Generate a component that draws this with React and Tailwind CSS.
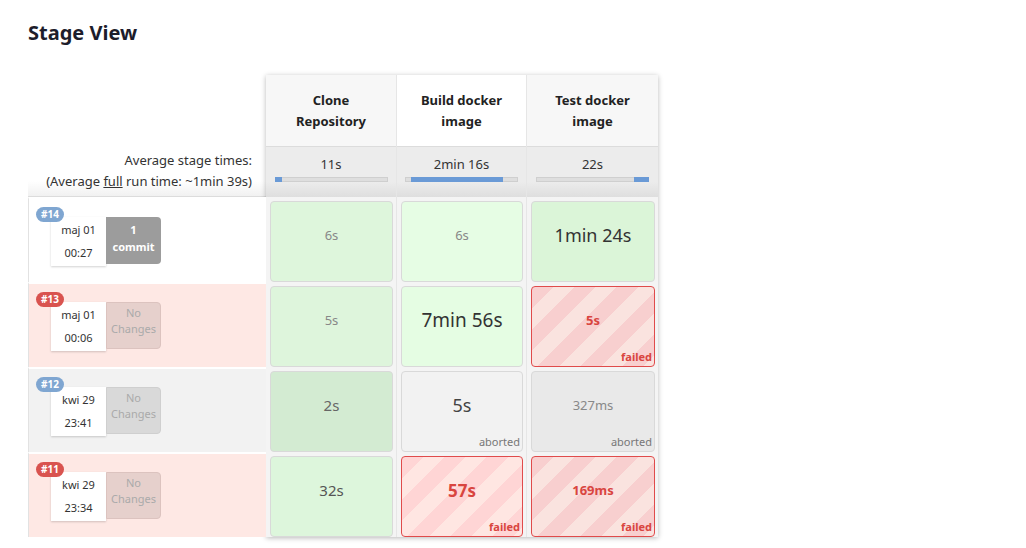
import React from "react";

const stages = [
    { name: ["Clone", "Repository"], avg: "11s", bar: { left: 0, width: 7 }, head: "bg-[#f7f7f7]" },
    { name: ["Build docker", "image"], avg: "2min 16s", bar: { left: 6, width: 92 }, head: "bg-white" },
    { name: ["Test docker", "image"], avg: "22s", bar: { left: 98, width: 15 }, head: "bg-[#f7f7f7]" },
];

const runs = [
    {
        id: "#14", status: "ok", date: "maj 01", time: "00:27", commit: true,
        cells: [
            { text: "6s", tone: "bg-[#def6dc]", size: "text-[13px] text-[#888]" },
            { text: "6s", tone: "bg-[#e6fde4]", size: "text-[13px] text-[#888]" },
            { text: "1min 24s", tone: "bg-[#dbf5d8]", size: "text-[18px] text-[#333]" },
        ],
    },
    {
        id: "#13", status: "failed", date: "maj 01", time: "00:06",
        cells: [
            { text: "5s", tone: "bg-[#def5dc]", size: "text-[13px] text-[#888]" },
            { text: "7min 56s", tone: "bg-[#e5fde3]", size: "text-[19px] text-[#333]" },
            { text: "5s", failed: true, stripes: "bg-[repeating-linear-gradient(135deg,#f8cfcf_0px,#f8cfcf_15px,#fae3df_15px,#fae3df_30px)]", size: "text-[13px]" },
        ],
    },
    {
        id: "#12", status: "aborted", date: "kwi 29", time: "23:41",
        cells: [
            { text: "2s", tone: "bg-[#d3ebd2]", size: "text-[15px] text-[#666]" },
            { text: "5s", tone: "bg-[#f2f2f2]", size: "text-[18px] text-[#444]", note: "aborted" },
            { text: "327ms", tone: "bg-[#e9e9e9]", size: "text-[13px] text-[#888]", note: "aborted" },
        ],
    },
    {
        id: "#11", status: "failed", date: "kwi 29", time: "23:34",
        cells: [
            { text: "32s", tone: "bg-[#ddf6dc]", size: "text-[15px] text-[#555]" },
            { text: "57s", failed: true, stripes: "bg-[repeating-linear-gradient(135deg,#ffd5d5_0px,#ffd5d5_15px,#ffe6e2_15px,#ffe6e2_30px)]", size: "text-[17px]" },
            { text: "169ms", failed: true, stripes: "bg-[repeating-linear-gradient(135deg,#f8cfcf_0px,#f8cfcf_15px,#fae3df_15px,#fae3df_30px)]", size: "text-[13px]" },
        ],
    },
];

function RunLabel({ run }) {
    const rowBg = run.status === "failed" ? "bg-[#fee8e4]" : run.status === "aborted" ? "bg-[#f2f2f2]" : "bg-white";
    const badge = run.status === "failed" ? "bg-[#d9534f]" : "bg-[#7fa6d1]";
    const noChanges = run.status === "failed" ? "bg-[#e6d0cc] border-[#dcc3bf]" : "bg-[#d9d9d9] border-[#cfcfcf]";

    return (
        <div className={`relative h-[85px] border-t-2 border-white border-l border-l-[#e2e2e2] ${rowBg}`}>
            <span className={`absolute left-[7px] top-[8px] z-10 rounded-full px-[5px] text-[10px] leading-[15px] font-bold text-white ${badge}`}>
                {run.id}
            </span>
            <div className="flex pl-[22px] pt-[18px]">
                <div className="w-[55px] h-[49px] bg-white shadow-[0_1px_2px_rgba(0,0,0,0.18)] flex flex-col items-center text-[11px] text-[#333] leading-[23px] pt-[1px]">
                    <span>{run.date}</span>
                    <span>{run.time}</span>
                </div>
                {run.commit ? (
                    <div className="w-[55px] h-[47px] rounded-r-[4px] bg-[#9c9c9c] flex flex-col items-center pt-[4px] text-[11px] font-bold text-white leading-[17px]">
                        <span>1</span>
                        <span>commit</span>
                    </div>
                ) : (
                    <div className={`w-[55px] h-[47px] rounded-r-[4px] border ${noChanges} flex flex-col items-center pt-[2px] text-[11px] text-[#aaa] leading-[16px]`}>
                        <span>No</span>
                        <span>Changes</span>
                    </div>
                )}
            </div>
        </div>
    );
}

function StageCell({ cell }) {
    const box = cell.failed
        ? `${cell.stripes} border-[#e04b4b]`
        : `${cell.tone} border-[#d9d9d9]`;
    return (
        <div className="h-[85px] pt-[4px] pb-[0px] pl-[4px] pr-[3px]">
            <div className={`relative h-full rounded-[4px] border ${box} flex items-center justify-center pb-[12px]`}>
                <span className={`${cell.size} ${cell.failed ? "font-bold text-[#d9453f]" : ""}`}>{cell.text}</span>
                {cell.failed && (
                    <span className="absolute right-[2px] bottom-[1px] text-[11px] font-bold text-[#d9453f]">failed</span>
                )}
                {cell.note && (
                    <span className="absolute right-[2px] bottom-[1px] text-[11px] text-[#777]">{cell.note}</span>
                )}
            </div>
        </div>
    );
}

export default function App() {
    return (
        <div className="min-h-screen bg-white pl-[28px] pt-[19px] font-['Noto_Sans','Open_Sans',sans-serif] text-[#333]">
            <h2 className="text-[20px] font-bold text-[#1d1d2b] leading-[28px]">Stage View</h2>

            <div className="flex mt-[28px]">
                <div className="w-[238px] flex flex-col">
                    <div className="h-[71px]" />
                    <div className="h-[51px] flex flex-col items-end justify-center pr-[14px] text-[13px] leading-[21px] text-[#333] bg-[linear-gradient(to_bottom,#ffffff_70%,#f1f1f1)] border-b border-[#dcdcdc]">
                        <span>Average stage times:</span>
                        <span>(Average <u>full</u> run time: ~1min 39s)</span>
                    </div>
                    {runs.map((run) => (
                        <RunLabel key={run.id} run={run} />
                    ))}
                </div>

                <div className="flex shadow-[0_1px_5px_rgba(0,0,0,0.28)] bg-[#f4f4f4]">
                    {stages.map((stage, i) => (
                        <div key={i} className={`flex flex-col ${i === 1 ? "w-[130px]" : "w-[131px]"} ${i < 2 ? "border-r border-[#e6e6e6]" : ""}`}>
                            <div className={`h-[71px] ${stage.head} flex flex-col items-center justify-center text-[13px] font-bold leading-[21px] text-[#222]`}>
                                <span>{stage.name[0]}</span>
                                <span>{stage.name[1]}</span>
                            </div>
                            <div className="h-[51px] border-t border-[#dcdcdc] bg-[linear-gradient(to_bottom,#ececec_70%,#dedede)] flex flex-col items-center pt-[6px]">
                                <span className="text-[13px] leading-[22px] text-[#333]">{stage.avg}</span>
                                <div className="relative mt-[2px] w-[113px] h-[5px] bg-[#dedede] border border-[#cfcfcf]">
                                    <div
                                        className="absolute top-[-1px] h-[5px] bg-[#6a9ad6]"
                                        style={{ left: `${stage.bar.left - 1}px`, width: `${stage.bar.width}px` }}
                                    />
                                </div>
                            </div>
                            {runs.map((run) => (
                                <StageCell key={run.id} cell={run.cells[i]} />
                            ))}
                        </div>
                    ))}
                </div>
            </div>
        </div>
    );
}
